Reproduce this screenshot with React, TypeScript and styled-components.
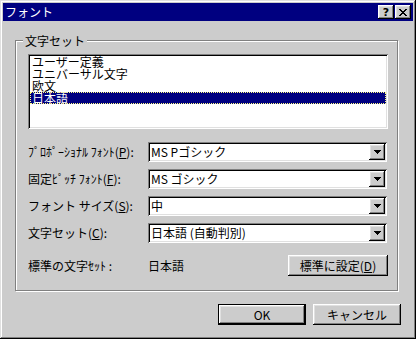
import React from "react";
import styled, { createGlobalStyle, css } from "styled-components";

const FACE = "#cccccc";

const Global = createGlobalStyle`
  html, body { margin: 0; padding: 0; background: ${FACE}; }
  body { font-family: "Noto Sans CJK JP", sans-serif; font-size: 12px; }
  * { box-sizing: border-box; }
`;

const raised = css`
  box-shadow: inset -1px -1px #000, inset 1px 1px #fff, inset -2px -2px #808080, inset 2px 2px #e0e0e0;
`;
const sunken = css`
  box-shadow: inset 1px 1px #808080, inset -1px -1px #fff, inset 2px 2px #000, inset -2px -2px #e0e0e0;
`;

const Window = styled.div`
  width: 416px;
  height: 339px;
  padding: 3px;
  background: ${FACE};
  display: flex;
  flex-direction: column;
  box-shadow: inset -1px -1px #000, inset 1px 1px #e0e0e0, inset -2px -2px #808080, inset 2px 2px #fff;
  font-family: "Noto Sans CJK JP", sans-serif;
  font-size: 12px;
  line-height: 12px;
  color: #000;
`;

const TitleBar = styled.div`
  height: 18px;
  background: #000080;
  color: #fff;
  display: flex;
  align-items: center;
  padding: 0 2px;
`;

const TitleText = styled.span`
  flex: 1;
  font-size: 12px;
`;

const CapButton = styled.div<{ $gap?: number }>`
  width: 16px;
  height: 14px;
  background: ${FACE};
  ${raised};
  display: flex;
  align-items: center;
  justify-content: center;
  margin-left: ${(p) => p.$gap ?? 0}px;
  color: #000;
  font-family: "DejaVu Sans", sans-serif;
  font-weight: bold;
  font-size: 11px;
  line-height: 11px;
`;

const Body = styled.div`
  flex: 1;
  display: flex;
  flex-direction: column;
  padding: 19px 12px 0 12px;
`;

const Group = styled.div`
  width: 383px;
  height: 251px;
  border: 1px solid #808080;
  box-shadow: inset 1px 1px #fff, 1px 1px #fff;
  display: flex;
  flex-direction: column;
  padding: 0 0 0 12px;
`;

const Legend = styled.div`
  align-self: flex-start;
  margin: -7px 0 0 -5px;
  padding: 0 2px;
  height: 13px;
  background: ${FACE};
  line-height: 13px;
`;

const ListBox = styled.div`
  margin-top: 7px;
  width: 360px;
  height: 75px;
  background: #fff;
  ${sunken};
  padding: 2px;
  display: flex;
  flex-direction: column;
`;

const ListItem = styled.div<{ $selected?: boolean }>`
  height: 12px;
  line-height: 12px;
  padding-left: 2px;
  white-space: nowrap;
  ${(p) =>
    p.$selected &&
    css`
      background: #000080;
      color: #fff;
      outline: 1px dotted #ffff80;
      outline-offset: -1px;
    `}
`;

const Rows = styled.div`
  margin-top: 13px;
  width: 360px;
  display: flex;
  flex-direction: column;
  gap: 7px;
`;

const Row = styled.div`
  display: flex;
  align-items: center;
  height: 20px;
`;

const Label = styled.div`
  width: 120px;
  flex: none;
  white-space: nowrap;
`;

const U = styled.span`
  text-decoration: underline;
  text-underline-offset: 1px;
`;

const Combo = styled.div`
  width: 239px;
  height: 20px;
  background: #fff;
  ${sunken};
  display: flex;
  align-items: center;
  padding: 2px;
`;

const ComboText = styled.div`
  flex: 1;
  padding-left: 1px;
  white-space: nowrap;
`;

const DropButton = styled.div`
  width: 16px;
  height: 16px;
  background: ${FACE};
  ${raised};
  display: flex;
  align-items: center;
  justify-content: center;
`;

const DefaultRow = styled.div`
  margin-top: 12px;
  width: 360px;
  display: flex;
  align-items: center;
  height: 21px;
`;

const Value = styled.div`
  flex: 1;
`;

const Button = styled.div<{ $w: number; $default?: boolean }>`
  width: ${(p) => p.$w}px;
  flex: none;
  height: 21px;
  background: ${FACE};
  display: flex;
  align-items: center;
  justify-content: center;
  white-space: nowrap;
  ${(p) =>
    p.$default
      ? css`
          box-shadow: inset 0 0 0 1px #000, inset -2px -2px #000, inset 2px 2px #fff, inset -3px -3px #808080, inset 3px 3px #e0e0e0;
        `
      : raised}
`;

const Footer = styled.div`
  margin-top: 13px;
  display: flex;
  justify-content: flex-end;
  gap: 7px;
`;

const Arrow = () => (
  <svg width="7" height="4" viewBox="0 0 7 4" shapeRendering="crispEdges">
    <path d="M0 0h7v1H0zM1 1h5v1H1zM2 2h3v1H2zM3 3h1v1H3z" fill="#000" />
  </svg>
);

const CloseIcon = () => (
  <svg width="8" height="7" viewBox="0 0 8 7" shapeRendering="crispEdges">
    <path
      d="M0 0h2v1H0zM6 0h2v1H6zM1 1h2v1H1zM5 1h2v1H5zM2 2h4v1H2zM3 3h2v1H3zM2 4h4v1H2zM1 5h2v1H1zM5 5h2v1H5zM0 6h2v1H0zM6 6h2v1H6z"
      fill="#000"
    />
  </svg>
);

const rows: { label: React.ReactNode; value: string }[] = [
  { label: <>ﾌﾟﾛﾎﾟｰｼｮﾅﾙ ﾌｫﾝﾄ(<U>P</U>):</>, value: "MS Pゴシック" },
  { label: <>固定ﾋﾟｯﾁ ﾌｫﾝﾄ(<U>F</U>):</>, value: "MS ゴシック" },
  { label: <>フォント サイズ(<U>S</U>):</>, value: "中" },
  { label: <>文字セット(<U>C</U>):</>, value: "日本語 (自動判別)" },
];

const items = ["ユーザー定義", "ユニバーサル文字", "欧文", "日本語"];

export default function App() {
  return (
    <>
      <Global />
      <Window>
        <TitleBar>
          <TitleText>フォント</TitleText>
          <CapButton>?</CapButton>
          <CapButton $gap={1}>
            <CloseIcon />
          </CapButton>
        </TitleBar>
        <Body>
          <Group>
            <Legend>文字セット</Legend>
            <ListBox>
              {items.map((it, i) => (
                <ListItem key={it} $selected={i === 3}>
                  {it}
                </ListItem>
              ))}
            </ListBox>
            <Rows>
              {rows.map((r, i) => (
                <Row key={i}>
                  <Label>{r.label}</Label>
                  <Combo>
                    <ComboText>{r.value}</ComboText>
                    <DropButton>
                      <Arrow />
                    </DropButton>
                  </Combo>
                </Row>
              ))}
            </Rows>
            <DefaultRow>
              <Label>標準の文字ｾｯﾄ :</Label>
              <Value>日本語</Value>
              <Button $w={100}>
                標準に設定(<U>D</U>)
              </Button>
            </DefaultRow>
          </Group>
          <Footer>
            <Button $w={88} $default>
              OK
            </Button>
            <Button $w={88}>キャンセル</Button>
          </Footer>
        </Body>
      </Window>
    </>
  );
}
